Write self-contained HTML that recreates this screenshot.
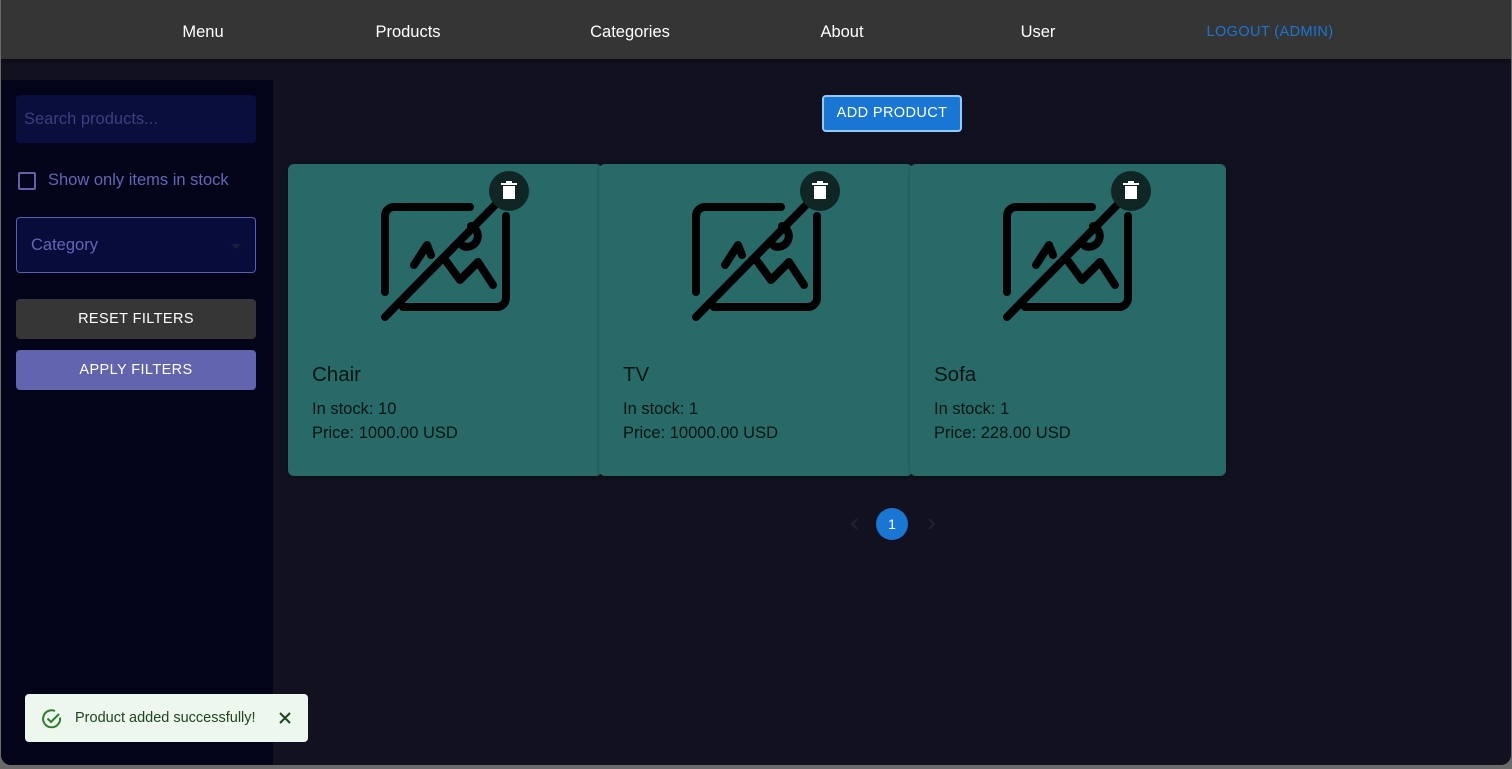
<!DOCTYPE html>
<html><head><style>
*{box-sizing:border-box;margin:0;padding:0}
body{width:1512px;height:769px;background:#6a6a6a;font-family:"Liberation Sans",sans-serif;overflow:hidden;position:relative}
.win{position:absolute;left:1px;top:0;width:1510px;height:765px;background:#12111f;border-radius:0 0 10px 10px;overflow:hidden}
.top{position:absolute;left:0;top:0;width:1510px;height:59px;background:#353535;box-shadow:0 2px 4px rgba(0,0,0,.4)}
.top span{position:absolute;top:23px;font-size:16.5px;color:#fff;transform:translateX(-50%)}
.side{position:absolute;left:0;top:80px;width:272px;height:700px;background:#03031a}
.search{position:absolute;left:15px;top:15px;width:240px;height:48px;background:#0a0e3d;border-radius:4px;color:#3a3f7e;font-size:16.5px;padding:15px 8px}
.cb{position:absolute;left:17px;top:92px;width:18px;height:18px;border:2px solid #6162ab;border-radius:2px}
.cbl{position:absolute;left:47px;top:91px;color:#6466b4;font-size:16.5px}
.sel{position:absolute;left:15px;top:137px;width:240px;height:56px;background:#080c3a;border:1px solid #5d5fb0;border-radius:4px;color:#6466b4;font-size:16.5px;padding:18px 14px}
.sel i{position:absolute;right:14px;top:26px;border:5px solid transparent;border-top-color:#1a1c40}
.btn{position:absolute;left:15px;width:240px;height:40px;border-radius:4px;color:#fff;font-size:14.5px;text-align:center;line-height:40px;letter-spacing:.4px}
.add{position:absolute;left:821px;top:95px;width:140px;height:37px;background:#1976d2;border:2px solid #90caf9;border-radius:4px;color:#fff;font-size:14.5px;text-align:center;line-height:33px;letter-spacing:.4px}
.card{position:absolute;top:164px;width:314px;height:312px;background:#276a68;border-radius:6px;box-shadow:0 1px 3px rgba(0,0,0,.3)}
.card svg{position:absolute;left:0;top:0}
.card h3{position:absolute;left:24px;top:199px;font-weight:normal;font-size:20.5px;color:#0b1514}
.card p{position:absolute;left:24px;font-size:16.5px;color:#0b1514}
.pg{position:absolute;left:875px;top:508px;width:32px;height:32px;border-radius:50%;background:#1976d2;color:#fff;font-size:14px;text-align:center;line-height:32px}
.snack{position:absolute;left:24px;top:694px;width:283px;height:48px;background:#edf7ed;border-radius:4px;color:#1e4620;font-size:14.5px}
</style></head><body>
<div class="win">
<div class="top">
<span style="left:202px">Menu</span><span style="left:407px">Products</span><span style="left:629px">Categories</span><span style="left:841px">About</span><span style="left:1037px">User</span><span style="left:1269px;color:#1976d2;font-size:14.5px;top:24px;letter-spacing:.4px">LOGOUT (ADMIN)</span>
</div>
<div class="side">
<div class="search">Search products...</div>
<div class="cb"></div><div class="cbl">Show only items in stock</div>
<div class="sel">Category<i></i></div>
<div class="btn" style="top:219px;background:#363636">RESET FILTERS</div>
<div class="btn" style="top:270px;background:#6264ad">APPLY FILTERS</div>
</div>
<div class="add">ADD PRODUCT</div>

<div class="card" style="left:287px">
<svg width="314" height="312"><g fill="none" stroke="#000" stroke-width="8" stroke-linecap="round" stroke-linejoin="round"><path d="M182 43H106a9 9 0 0 0-9 9V128"/><path d="M115 143H209a9 9 0 0 0 9-9V52"/><path d="M97 153L213 35"/><path d="M126 101L139 81L143 91"/><path d="M158 97L172 116L190 98L205 121"/><path d="M183 62a10 10 0 1 1-8 20"/></g><circle cx="221" cy="27" r="20" fill="#0f2624"/><path d="M215 22h12v13h-12zM213 19h16v2h-16zM218 17h6v2h-6z" fill="#fff"/></svg>
<h3>Chair</h3><p style="top:236px">In stock: 10</p><p style="top:260px">Price: 1000.00 USD</p></div>

<div class="card" style="left:598px">
<svg width="314" height="312"><g fill="none" stroke="#000" stroke-width="8" stroke-linecap="round" stroke-linejoin="round"><path d="M182 43H106a9 9 0 0 0-9 9V128"/><path d="M115 143H209a9 9 0 0 0 9-9V52"/><path d="M97 153L213 35"/><path d="M126 101L139 81L143 91"/><path d="M158 97L172 116L190 98L205 121"/><path d="M183 62a10 10 0 1 1-8 20"/></g><circle cx="221" cy="27" r="20" fill="#0f2624"/><path d="M215 22h12v13h-12zM213 19h16v2h-16zM218 17h6v2h-6z" fill="#fff"/></svg>
<h3>TV</h3><p style="top:236px">In stock: 1</p><p style="top:260px">Price: 10000.00 USD</p></div>

<div class="card" style="left:909px;width:316px">
<svg width="314" height="312"><g fill="none" stroke="#000" stroke-width="8" stroke-linecap="round" stroke-linejoin="round"><path d="M182 43H106a9 9 0 0 0-9 9V128"/><path d="M115 143H209a9 9 0 0 0 9-9V52"/><path d="M97 153L213 35"/><path d="M126 101L139 81L143 91"/><path d="M158 97L172 116L190 98L205 121"/><path d="M183 62a10 10 0 1 1-8 20"/></g><circle cx="221" cy="27" r="20" fill="#0f2624"/><path d="M215 22h12v13h-12zM213 19h16v2h-16zM218 17h6v2h-6z" fill="#fff"/></svg>
<h3>Sofa</h3><p style="top:236px">In stock: 1</p><p style="top:260px">Price: 228.00 USD</p></div>

<svg style="position:absolute;left:845px;top:516px" width="100" height="16"><path d="M11 3L6 8L11 13M83 3L88 8L83 13" stroke="#222236" stroke-width="2" fill="none"/></svg>
<div class="pg">1</div>

<div class="snack">
<svg style="position:absolute;left:16px;top:14px" width="22" height="22" viewBox="0 0 22 22"><path d="M19 9.5A8.5 8.5 0 1 1 14 3" fill="none" stroke="#2e7d32" stroke-width="2"/><path d="M6.5 10.5l3.5 3.5l8-8" fill="none" stroke="#2e7d32" stroke-width="2"/></svg>
<span style="position:absolute;left:50px;top:16px">Product added successfully!</span>
<svg style="position:absolute;left:253px;top:17px" width="14" height="14"><path d="M2 2L12 12M12 2L2 12" stroke="#1e4620" stroke-width="2"/></svg>
</div>
</div>
</body></html>
